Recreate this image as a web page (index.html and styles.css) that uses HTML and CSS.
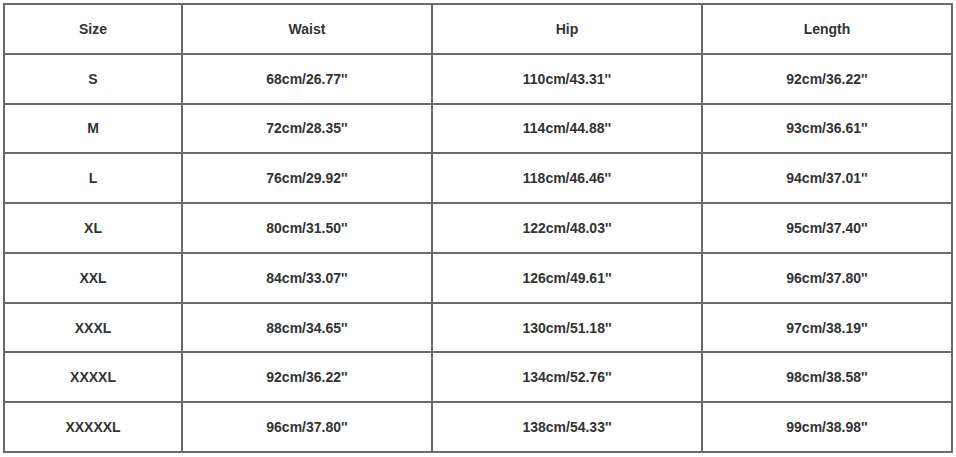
FILE: index.html
```html
<!DOCTYPE html>
<html>
<head>
<meta charset="utf-8">
<link rel="stylesheet" href="styles.css">
</head>
<body>
<div class="chart">
  <div class="cell">Size</div><div class="cell">Waist</div><div class="cell">Hip</div><div class="cell">Length</div>
  <div class="cell">S</div><div class="cell">68cm/26.77''</div><div class="cell">110cm/43.31''</div><div class="cell">92cm/36.22''</div>
  <div class="cell">M</div><div class="cell">72cm/28.35''</div><div class="cell">114cm/44.88''</div><div class="cell">93cm/36.61''</div>
  <div class="cell">L</div><div class="cell">76cm/29.92''</div><div class="cell">118cm/46.46''</div><div class="cell">94cm/37.01''</div>
  <div class="cell">XL</div><div class="cell">80cm/31.50''</div><div class="cell">122cm/48.03''</div><div class="cell">95cm/37.40''</div>
  <div class="cell">XXL</div><div class="cell">84cm/33.07''</div><div class="cell">126cm/49.61''</div><div class="cell">96cm/37.80''</div>
  <div class="cell">XXXL</div><div class="cell">88cm/34.65''</div><div class="cell">130cm/51.18''</div><div class="cell">97cm/38.19''</div>
  <div class="cell">XXXXL</div><div class="cell">92cm/36.22''</div><div class="cell">134cm/52.76''</div><div class="cell">98cm/38.58''</div>
  <div class="cell">XXXXXL</div><div class="cell">96cm/37.80''</div><div class="cell">138cm/54.33''</div><div class="cell">99cm/38.98''</div>
</div>
</body>
</html>
```
FILE: styles.css
```css
html, body {
  margin: 0;
  padding: 0;
  background: #fff;
}
body {
  padding: 3px 0 0 3px;
  font-family: "Liberation Sans", Arial, sans-serif;
}
.chart {
  display: grid;
  grid-template-columns: 176px 248px 268px 248px;
  grid-template-rows: repeat(9, 1fr);
  gap: 2px;
  padding: 2px;
  width: 946px;
  height: 446px;
  background: #6a6a6a;
}
.cell {
  background: #fff;
  display: flex;
  align-items: center;
  justify-content: center;
  font-size: 14px;
  font-weight: bold;
  color: #333;
}
```
